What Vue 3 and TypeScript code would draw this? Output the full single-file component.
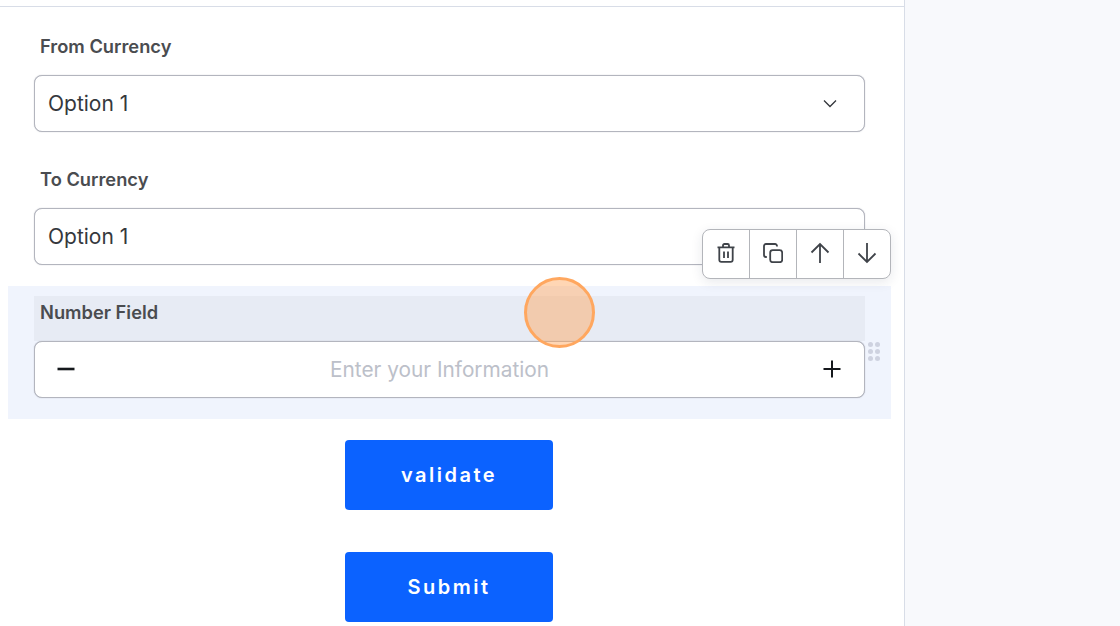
<script setup lang="ts">
const gripDots: number[] = [1, 2, 3, 4, 5, 6]
</script>

<template>
  <div class="page">
    <main class="canvas">
      <div class="topline"></div>
      <form class="form" @submit.prevent>
        <section class="field">
          <div class="label">From Currency</div>
          <div class="control select">
            <span class="value">Option 1</span>
            <svg class="chevron" width="14" height="9" viewBox="0 0 14 9" fill="none">
              <path d="M1 1.500 7 7.500l6-6" stroke="#33363b" stroke-width="1.300" />
            </svg>
          </div>
        </section>
        <section class="field">
          <div class="label">To Currency</div>
          <div class="control select">
            <span class="value">Option 1</span>
          </div>
        </section>
        <section class="field active">
          <div class="label label-hl">Number Field</div>
          <div class="control number">
            <svg class="step" width="20" height="20" viewBox="0 0 20 20" fill="none">
              <path d="M1.500 10h17" stroke="#15181c" stroke-width="2.600" />
            </svg>
            <span class="placeholder">Enter your Information</span>
            <svg class="step" width="20" height="20" viewBox="0 0 20 20" fill="none">
              <path d="M1.500 10h17M10 1.500v17" stroke="#15181c" stroke-width="2" />
            </svg>
          </div>
          <div class="grip">
            <i v-for="d in gripDots" :key="d"></i>
          </div>
          <div class="toolbar">
            <button type="button" class="tool" aria-label="Delete">
              <svg width="18" height="20" viewBox="0 0 18 20" fill="none" stroke="#3f4349" stroke-width="1.800">
                <path d="M.5 4.300h17M6 4.100V2.400C6 1.500 6.600 1 7.400 1h3.200c.8 0 1.400.5 1.400 1.400v1.700" />
                <path d="M2.300 4.500v12.200c0 1.300.8 2.100 2 2.100h9.400c1.200 0 2-.8 2-2.100V4.500" />
                <path d="M7 8.500v6.500M11 8.500v6.500" />
              </svg>
            </button>
            <button type="button" class="tool" aria-label="Duplicate">
              <svg width="20" height="20" viewBox="0 0 20 20" fill="none" stroke="#3f4349" stroke-width="1.800">
                <rect x="7.200" y="7.200" width="12" height="12" rx="2.500" />
                <path d="M14 3.500V3c0-1.200-.8-2-2-2H3C1.800 1 1 1.800 1 3v9c0 1.200.8 2 2 2h.8" />
              </svg>
            </button>
            <button type="button" class="tool" aria-label="Move up">
              <svg width="20" height="22" viewBox="0 0 20 22" fill="none" stroke="#3f4349" stroke-width="1.800">
                <path d="M10 21V2M1.500 10.500 10 2l8.500 8.500" />
              </svg>
            </button>
            <button type="button" class="tool" aria-label="Move down">
              <svg width="20" height="22" viewBox="0 0 20 22" fill="none" stroke="#3f4349" stroke-width="1.800">
                <path d="M10 1v19M1.500 11.500 10 20l8.500-8.500" />
              </svg>
            </button>
          </div>
        </section>
        <div class="actions">
          <button type="button" class="primary">validate</button>
          <button type="submit" class="primary">Submit</button>
        </div>
      </form>
    </main>
    <aside class="side"></aside>
    <div class="pointer"></div>
  </div>
</template>

<style>
html, body { margin: 0; padding: 0; overflow: hidden; background: #fff; }
</style>

<style scoped>
.page {
  position: relative;
  display: flex;
  width: 1120px;
  height: 626px;
  overflow: hidden;
  font-family: Inter, "Liberation Sans", sans-serif;
  background: #fff;
}
.canvas {
  width: 904px;
  flex: none;
  box-sizing: border-box;
}
.topline {
  height: 6px;
  border-bottom: 1px solid #d8dde7;
}
.form {
  padding: 13px 13px 0 8px;
}
.field {
  position: relative;
  box-sizing: border-box;
  height: 133px;
  padding: 10px 26px 0;
}
.active {
  background: #f0f4fd;
  width: 883px;
}
.label {
  height: 45px;
  box-sizing: border-box;
  padding: 5px 6px 0;
  font-size: 18.300px;
  line-height: 22px;
  font-weight: 600;
  color: #4a4c50;
}
.label-hl {
  background: #e7ebf4;
}
.control {
  display: flex;
  align-items: center;
  box-sizing: border-box;
  height: 57px;
  width: 831px;
  padding-bottom: 1px;
  background: #fff;
  border: 1px solid #b3b5be;
  border-radius: 8px;
  box-shadow: 0 0 1px rgba(120, 124, 140, 0.6);
}
.select {
  justify-content: space-between;
  padding-left: 13px;
  padding-right: 27px;
}
.value {
  font-size: 21px;
  color: #35383d;
}
.number {
  justify-content: space-between;
  padding-left: 21px;
  padding-right: 22px;
}
.placeholder {
  flex: 1;
  padding-right: 19px;
  text-align: center;
  font-size: 20.800px;
  color: #bcc0c9;
}
.grip {
  position: absolute;
  left: 860px;
  top: 56px;
  display: grid;
  grid-template-columns: 5px 5px;
  gap: 2px;
}
.grip i {
  width: 5px;
  height: 5px;
  border-radius: 50%;
  background: #ced2e0;
}
.toolbar {
  position: absolute;
  left: 694px;
  top: -57px;
  display: flex;
  box-sizing: border-box;
  width: 188.500px;
  height: 50px;
  background: #fff;
  border: 1px solid #b3b5ba;
  border-radius: 8px;
  box-shadow: 0 3px 12px rgba(30, 40, 70, 0.10);
}
.tool {
  flex: 1;
  display: flex;
  align-items: center;
  justify-content: center;
  padding: 0 0 2px;
  background: none;
  border: 0;
  border-right: 1px solid #b3b5ba;
}
.tool:last-child {
  border-right: 0;
}
.actions {
  display: flex;
  flex-direction: column;
  align-items: center;
  gap: 42px;
  width: 882px;
  padding-top: 21px;
}
.primary {
  width: 208px;
  height: 70px;
  flex: none;
  border: 0;
  border-radius: 4px;
  background: #0b62ff;
  color: #fff;
  font-family: inherit;
  font-size: 20px;
  font-weight: 600;
  letter-spacing: 2.500px;
}
.side {
  flex: 1;
  background: #f8f9fc;
  border-left: 1px solid #d8dde7;
}
.pointer {
  position: absolute;
  left: 524px;
  top: 277px;
  width: 71px;
  height: 71px;
  box-sizing: border-box;
  border-radius: 50%;
  background: rgba(255, 164, 88, 0.45);
  border: 3px solid #ffa75f;
}
</style>
